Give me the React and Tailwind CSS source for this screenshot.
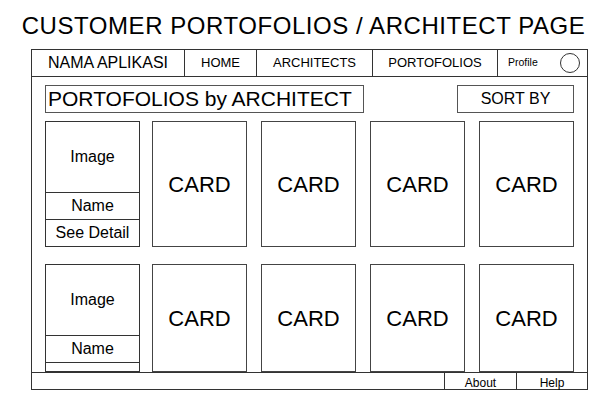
export default function App() {
  const font = { fontFamily: '"Liberation Sans", Arial, Helvetica, sans-serif' };
  const Card = ({ className = "", h = "h-[126px]" }) => (
    <div className={`w-[95px] ${h} shrink-0 border border-[#444] flex items-center justify-center text-[22px] text-black ${className}`}>
      CARD
    </div>
  );
  const Profile = ({ detail = true, h = "h-[126px]" }) => (
    <div className={`w-[95px] ${h} shrink-0 border border-[#333] flex flex-col text-[16px] text-black`}>
      <div className="h-[71px] shrink-0 border-b border-[#333] flex items-center justify-center">Image</div>
      <div className="h-[27px] shrink-0 border-b border-[#333] flex items-center justify-center">Name</div>
      <div className="flex-1 flex items-center justify-center">{detail ? "See Detail" : ""}</div>
    </div>
  );
  const Row = ({ className = "", h = "h-[126px]", detail = true }) => (
    <div className={`flex ${className}`}>
      <Profile h={h} detail={detail} />
      <Card h={h} className="ml-[12px]" />
      <Card h={h} className="ml-[14px]" />
      <Card h={h} className="ml-[14px]" />
      <Card h={h} className="ml-[14px]" />
    </div>
  );
  return (
    <div className="w-[607px] h-[401px] bg-white text-black overflow-hidden" style={font}>
      <div className="h-[49px] pt-[3px] leading-[46px] text-[24px] tracking-[0.55px] text-center whitespace-nowrap">
        CUSTOMER PORTOFOLIOS / ARCHITECT PAGE
      </div>
      <div className="ml-[31px] w-[557px] h-[341px] border border-[#333] flex flex-col">
        <div className="h-[27px] shrink-0 border-b border-[#333] flex">
          <div className="w-[153px] border-r border-[#333] flex items-center justify-center text-[16px]">NAMA APLIKASI</div>
          <div className="w-[72px] border-r border-[#333] flex items-center justify-center text-[13px]">HOME</div>
          <div className="w-[116px] border-r border-[#333] flex items-center justify-center text-[13px]">ARCHITECTS</div>
          <div className="w-[125px] border-r border-[#333] flex items-center justify-center text-[13px]">PORTOFOLIOS</div>
          <div className="flex-1 flex items-center pl-[10px] pr-[7px] justify-between">
            <span className="text-[10.5px]">Profile</span>
            <span className="w-[20px] h-[20px] rounded-full border border-[#333]"></span>
          </div>
        </div>
        <div className="flex-1 overflow-hidden pl-[13px] pr-[13px] pt-[8px]">
          <div className="flex justify-between h-[28px]">
            <div className="w-[319px] border border-[#555] flex items-center pl-[2px] text-[21px] whitespace-nowrap">
              PORTOFOLIOS by ARCHITECT
            </div>
            <div className="w-[117px] border border-[#555] flex items-center justify-center text-[16px]">SORT BY</div>
          </div>
          <Row className="mt-[8px]" />
          <Row className="mt-[17px]" h="h-[108px]" detail={false} />
        </div>
        <div className="h-[17px] shrink-0 border-t border-[#333] flex text-[12px]">
          <div className="flex-1"></div>
          <div className="w-[72px] border-l border-[#333] flex items-end justify-center leading-[12px]">About</div>
          <div className="w-[71px] border-l border-[#333] flex items-end justify-center leading-[12px]">Help</div>
        </div>
      </div>
    </div>
  );
}
